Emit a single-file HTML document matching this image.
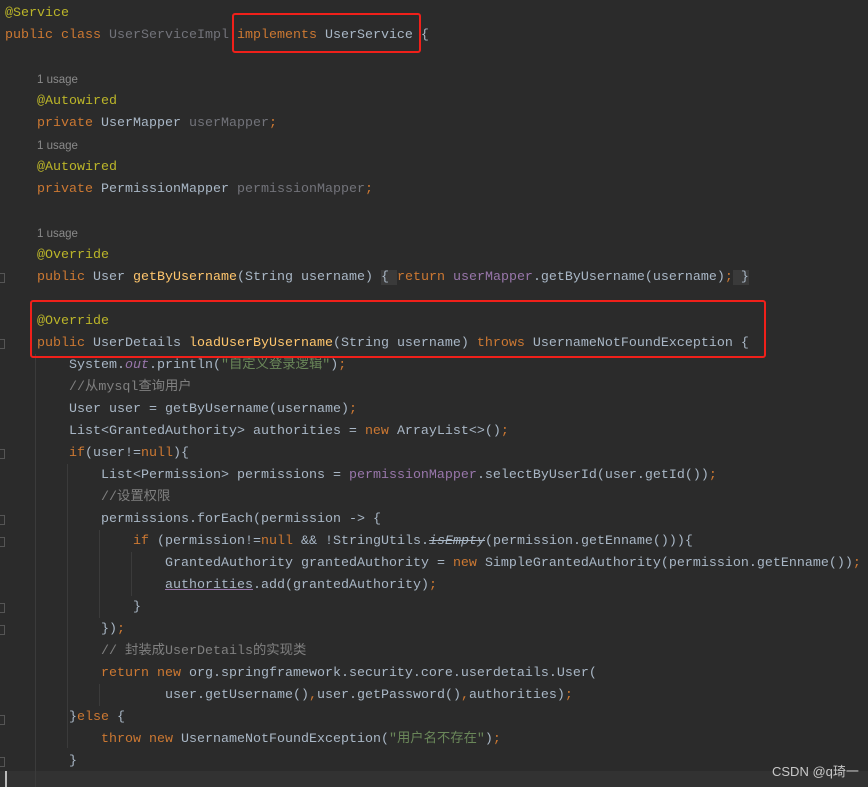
<!DOCTYPE html>
<html><head><meta charset="utf-8"><style>
html,body{margin:0;padding:0}
body{width:868px;height:787px;background:#2b2b2b;position:relative;overflow:hidden;font-family:"Liberation Mono","Noto Sans CJK SC",monospace;font-size:13.33px;color:#a9b7c6}
.l{position:absolute;left:5px;height:22px;line-height:22px;white-space:pre;margin-top:2px}
.k{color:#cc7832}.a{color:#bbb529}.m{color:#ffc66d}.f{color:#9876aa}.g{color:#72737a}.s{color:#6a8759}.c{color:#808080}.i{font-style:italic}
.u{font-family:"Liberation Sans",sans-serif;font-size:11.5px;color:#8a8a8a}
.cj{font-family:"Noto Sans CJK SC",sans-serif;line-height:0}
.box{position:absolute;border:2px solid #f0201a;border-radius:3px}
.gd{position:absolute;width:1px;background:#3b3b3b}
.fm{position:absolute;left:0;width:4px;height:8px;border:1px solid #555;border-left:none}
</style></head><body>
<div style="position:absolute;left:0;top:771px;width:868px;height:16px;background:#323232"></div>
<div style="position:absolute;left:5px;top:771px;width:2px;height:16px;background:#bbb"></div>
<div class="gd" style="left:35px;top:354px;height:433px"></div>
<div class="gd" style="left:67px;top:464px;height:284px"></div>
<div class="gd" style="left:99px;top:530px;height:88px"></div>
<div class="gd" style="left:99px;top:684px;height:22px"></div>
<div class="gd" style="left:131px;top:552px;height:44px"></div>
<div class="fm" style="top:273px"></div><div class="fm" style="top:339px"></div><div class="fm" style="top:449px"></div><div class="fm" style="top:515px"></div><div class="fm" style="top:537px"></div><div class="fm" style="top:603px"></div><div class="fm" style="top:625px"></div><div class="fm" style="top:715px"></div><div class="fm" style="top:757px"></div>

<div class="l a" style="top:1px">@Service</div>
<div class="l" style="top:23px"><span class="k">public class </span><span class="g">UserServiceImpl </span><span class="k">implements </span>UserService {</div>
<div class="l u" style="top:67px;left:37px">1 usage</div>
<div class="l a" style="top:89px;left:37px">@Autowired</div>
<div class="l" style="top:111px;left:37px"><span class="k">private </span>UserMapper <span class="g">userMapper</span><span class="k">;</span></div>
<div class="l u" style="top:133px;left:37px">1 usage</div>
<div class="l a" style="top:155px;left:37px">@Autowired</div>
<div class="l" style="top:177px;left:37px"><span class="k">private </span>PermissionMapper <span class="g">permissionMapper</span><span class="k">;</span></div>
<div class="l u" style="top:221px;left:37px">1 usage</div>
<div class="l a" style="top:243px;left:37px">@Override</div>
<div class="l" style="top:265px;left:37px"><span class="k">public </span>User <span class="m">getByUsername</span>(String username) <span style="background:#3a3a3a">{ </span><span class="k">return </span><span class="f">userMapper</span>.getByUsername(username)<span class="k">;</span><span style="background:#3a3a3a"> }</span></div>
<div class="l a" style="top:309px;left:37px">@Override</div>
<div class="l" style="top:331px;left:37px"><span class="k">public </span>UserDetails <span class="m">loadUserByUsername</span>(String username) <span class="k">throws </span>UsernameNotFoundException {</div>
<div class="l" style="top:353px;left:69px">System.<span class="f i">out</span>.println(<span class="s">"<span class="cj">自定义登录逻辑</span>"</span>)<span class="k">;</span></div>
<div class="l c" style="top:375px;left:69px">//<span class="cj">从</span>mysql<span class="cj">查询用户</span></div>
<div class="l" style="top:397px;left:69px">User user = getByUsername(username)<span class="k">;</span></div>
<div class="l" style="top:419px;left:69px">List&lt;GrantedAuthority&gt; authorities = <span class="k">new </span>ArrayList&lt;&gt;()<span class="k">;</span></div>
<div class="l" style="top:441px;left:69px"><span class="k">if</span>(user!=<span class="k">null</span>){</div>
<div class="l" style="top:463px;left:101px">List&lt;Permission&gt; permissions = <span class="f">permissionMapper</span>.selectByUserId(user.getId())<span class="k">;</span></div>
<div class="l c" style="top:485px;left:101px">//<span class="cj">设置权限</span></div>
<div class="l" style="top:507px;left:101px">permissions.forEach(permission -&gt; {</div>
<div class="l" style="top:529px;left:133px"><span class="k">if </span>(permission!=<span class="k">null </span>&amp;&amp; !StringUtils.<span class="i" style="text-decoration:line-through">isEmpty</span>(permission.getEnname())){</div>
<div class="l" style="top:551px;left:165px">GrantedAuthority grantedAuthority = <span class="k">new </span>SimpleGrantedAuthority(permission.getEnname())<span class="k">;</span></div>
<div class="l" style="top:573px;left:165px"><span style="text-decoration:underline;text-decoration-color:#9876aa">authorities</span>.add(grantedAuthority)<span class="k">;</span></div>
<div class="l" style="top:595px;left:133px">}</div>
<div class="l" style="top:617px;left:101px">})<span class="k">;</span></div>
<div class="l c" style="top:639px;left:101px">// <span class="cj">封装成</span>UserDetails<span class="cj">的实现类</span></div>
<div class="l" style="top:661px;left:101px"><span class="k">return new </span>org.springframework.security.core.userdetails.User(</div>
<div class="l" style="top:683px;left:165px">user.getUsername()<span class="k">,</span>user.getPassword()<span class="k">,</span>authorities)<span class="k">;</span></div>
<div class="l" style="top:705px;left:69px">}<span class="k">else </span>{</div>
<div class="l" style="top:727px;left:101px"><span class="k">throw new </span>UsernameNotFoundException(<span class="s">"<span class="cj">用户名不存在</span>"</span>)<span class="k">;</span></div>
<div class="l" style="top:749px;left:69px">}</div>

<div class="box" style="left:232px;top:13px;width:185px;height:36px"></div>
<div class="box" style="left:30px;top:300px;width:732px;height:54px"></div>
<div style="position:absolute;left:772px;top:761px;font-family:'Liberation Sans','Noto Sans CJK SC',sans-serif;font-size:13px;color:#c8c8c8">CSDN @q琦一</div>
</body></html>
